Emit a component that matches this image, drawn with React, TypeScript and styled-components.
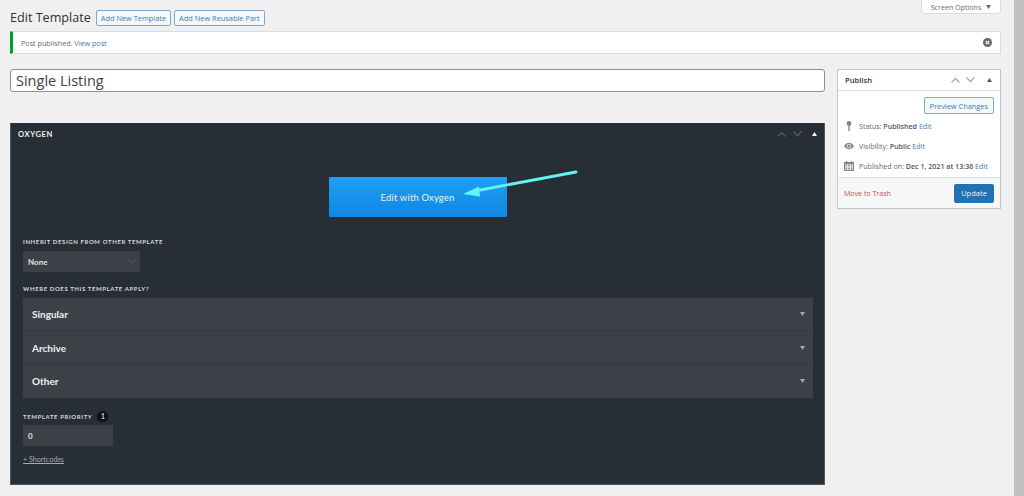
import React from 'react';
import styled, {createGlobalStyle} from "styled-components";

const GlobalStyle = createGlobalStyle`
  html, body {
    margin: 0;
    padding: 0;
    background: #f0f0f1;
    overflow: hidden;
  }
  * {
    box-sizing: border-box;
  }
`

const Chevron = ({up}: { up?: boolean }) => (
    <svg width="9" height="6" viewBox="0 0 9 6" fill="none">
        <path d={up ? "M0.5 5.5 L4.5 1.5 L8.5 5.5" : "M0.5 0.5 L4.5 4.5 L8.5 0.5"} stroke="currentColor" strokeWidth="1.3"/>
    </svg>
);

const Triangle = ({down}: { down?: boolean }) => (
    <svg width="5" height="4" viewBox="0 0 5 4" fill="currentColor">
        <path d={down ? "M0 0 H5 L2.5 4 Z" : "M0 4 H5 L2.5 0 Z"}/>
    </svg>
);

const PinIcon = () => (
    <svg width="10" height="10" viewBox="0 0 10 10" fill="#82878c">
        <circle cx="5" cy="2.4" r="2.4"/>
        <rect x="4.3" y="3.5" width="1.4" height="6.5"/>
    </svg>
);

const EyeIcon = () => (
    <svg width="10" height="10" viewBox="0 0 10 10">
        <path d="M0 5 C1.6 2.6 3.3 1.8 5 1.8 C6.7 1.8 8.4 2.6 10 5 C8.4 7.4 6.7 8.2 5 8.2 C3.3 8.2 1.6 7.4 0 5 Z" fill="#82878c"/>
        <circle cx="5" cy="5" r="2.3" fill="#e6e6e7"/>
        <circle cx="5" cy="5" r="1.5" fill="#82878c"/>
    </svg>
);

const CalendarIcon = () => (
    <svg width="10" height="10" viewBox="0 0 10 10" fill="#82878c">
        <rect x="0" y="1" width="10" height="9"/>
        <rect x="2" y="0" width="1.2" height="2"/>
        <rect x="6.8" y="0" width="1.2" height="2"/>
        <rect x="1" y="3.2" width="8" height="5.8" fill="#e6e6e7"/>
        <path d="M1.6 3.8h1.4v1.4H1.6zM4.3 3.8h1.4v1.4H4.3zM7 3.8h1.4v1.4H7zM1.6 6.6h1.4v1.8H1.6zM4.3 6.6h1.4v1.8H4.3zM7 6.6h1.4v1.8H7z"/>
    </svg>
);

const App = () => {
    return (
        <Page>
            <GlobalStyle/>
            <Main>
                <Header>
                    <TitleGroup>
                        <PageTitle>Edit Template</PageTitle>
                        <OutlineButton>Add New Template</OutlineButton>
                        <OutlineButton>Add New Reusable Part</OutlineButton>
                    </TitleGroup>
                    <ScreenOptions>Screen Options <Triangle down/></ScreenOptions>
                </Header>
                <Notice>
                    <span>Post published. <WpLink>View post</WpLink></span>
                    <Dismiss>
                        <svg width="9" height="9" viewBox="0 0 9 9">
                            <circle cx="4.5" cy="4.5" r="4.5" fill="#646970"/>
                            <path d="M2.8 2.8 L6.2 6.2 M6.2 2.8 L2.8 6.2" stroke="#fff" strokeWidth="1.2"/>
                        </svg>
                    </Dismiss>
                </Notice>
                <Columns>
                    <Left>
                        <TitleInput>Single Listing</TitleInput>
                        <OxygenPanel>
                            <OxygenHeader>
                                <OxygenTitle>OXYGEN</OxygenTitle>
                                <HandleActions>
                                    <Chevron up/>
                                    <Chevron/>
                                    <WhiteTriangle><Triangle/></WhiteTriangle>
                                </HandleActions>
                            </OxygenHeader>
                            <OxygenBody>
                                <EditRow>
                                    <EditButton>Edit with Oxygen</EditButton>
                                </EditRow>
                                <FieldLabel>INHERIT DESIGN FROM OTHER TEMPLATE</FieldLabel>
                                <SelectBox>
                                    None
                                    <svg width="8" height="5" viewBox="0 0 8 5" fill="none">
                                        <path d="M0.5 0.5 L4 4 L7.5 0.5" stroke="#55595f" strokeWidth="1"/>
                                    </svg>
                                </SelectBox>
                                <FieldLabel>WHERE DOES THIS TEMPLATE APPLY?</FieldLabel>
                                <Accordion>
                                    {['Singular', 'Archive', 'Other'].map((name) => (
                                        <AccordionRow key={name}>
                                            {name}
                                            <AccordionArrow><Triangle down/></AccordionArrow>
                                        </AccordionRow>
                                    ))}
                                </Accordion>
                                <PriorityLabel>
                                    <FieldLabel>TEMPLATE PRIORITY</FieldLabel>
                                    <InfoBadge>1</InfoBadge>
                                </PriorityLabel>
                                <PriorityInput>0</PriorityInput>
                                <Shortcodes>+ Shortcodes</Shortcodes>
                            </OxygenBody>
                            <Arrow width="130" height="40" viewBox="0 0 130 40">
                                <path d="M123 4 L27 22" stroke="#5ff5f8" strokeWidth="2.8" strokeLinecap="round"/>
                                <path d="M10 26 L26 18.5 L27 28.5 Z" fill="#5ff5f8"/>
                            </Arrow>
                        </OxygenPanel>
                    </Left>
                    <PublishBox>
                        <PublishHeader>
                            <PublishTitle>Publish</PublishTitle>
                            <PublishActions>
                                <Chevron up/>
                                <Chevron/>
                                <DarkTriangle><Triangle/></DarkTriangle>
                            </PublishActions>
                        </PublishHeader>
                        <PublishBody>
                            <PreviewRow>
                                <PreviewButton>Preview Changes</PreviewButton>
                            </PreviewRow>
                            <MetaRow><PinIcon/><span>Status: <b>Published</b> <WpLink>Edit</WpLink></span></MetaRow>
                            <MetaRow><EyeIcon/><span>Visibility: <b>Public</b> <WpLink>Edit</WpLink></span></MetaRow>
                            <MetaRow><CalendarIcon/><span>Published on: <b>Dec 1, 2021 at 13:36</b> <WpLink>Edit</WpLink></span></MetaRow>
                        </PublishBody>
                        <PublishFooter>
                            <TrashLink>Move to Trash</TrashLink>
                            <UpdateButton>Update</UpdateButton>
                        </PublishFooter>
                    </PublishBox>
                </Columns>
            </Main>
            <Scrollbar/>
        </Page>
    );
};

export default App;

const Page = styled.div`
  display: flex;
  width: 1024px;
  height: 496px;
  overflow: hidden;
  background: #f0f0f1;
  font-family: "Open Sans", "Liberation Sans", sans-serif;
  color: #3c434a;
`
const Main = styled.div`
  width: 1014px;
  padding: 0 13px 0 10px;
`
const Scrollbar = styled.div`
  width: 10px;
  background: #c1c1c1;
`
const Header = styled.div`
  display: flex;
  justify-content: space-between;
  align-items: flex-start;
  height: 31px;
`
const TitleGroup = styled.div`
  display: flex;
  align-items: center;
  gap: 3px;
  padding-top: 9px;
`
const PageTitle = styled.h1`
  margin: 0 2px 0 0;
  font-size: 12.6px;
  font-weight: 400;
  line-height: 17px;
  color: #2c3338;
`
const OutlineButton = styled.button`
  height: 16px;
  padding: 0 4px;
  border: 1px solid #7fa9cb;
  border-radius: 2px;
  background: #f6f7f7;
  color: #3a80b8;
  font-family: inherit;
  font-size: 7.4px;
  line-height: 14px;
  white-space: nowrap;
`
const PreviewButton = styled(OutlineButton)`
  height: 17px;
  padding: 0 5px;
`
const ScreenOptions = styled.div`
  display: flex;
  align-items: center;
  justify-content: center;
  gap: 5px;
  width: 80px;
  height: 14px;
  background: #fff;
  border: 1px solid #dcdcde;
  border-top: 0;
  border-radius: 0 0 3px 3px;
  font-size: 7.1px;
  color: #646970;
`
const Notice = styled.div`
  display: flex;
  justify-content: space-between;
  align-items: center;
  height: 23px;
  padding: 0 8px 0 8px;
  background: #fff;
  border: 1px solid #dcdcde;
  border-left: 3px solid #00a32a;
  font-size: 7.2px;
  color: #646970;
`
const WpLink = styled.span`
  color: #3a80b8;
  font-weight: 400;
`
const Dismiss = styled.span`
  display: flex;
`
const Columns = styled.div`
  display: grid;
  grid-template-columns: 815px 164px;
  gap: 12px;
  align-items: start;
  margin-top: 15px;
`
const Left = styled.div`
  display: flex;
  flex-direction: column;
  gap: 31px;
`
const TitleInput = styled.div`
  height: 23px;
  padding-left: 5px;
  background: #fff;
  border: 1px solid #8c8f94;
  border-radius: 3px;
  font-size: 14.5px;
  line-height: 21px;
  color: #3c434a;
`
const OxygenPanel = styled.section`
  position: relative;
  height: 362px;
  background: #272e35;
  border: 1px solid #50575e;
  border-width: 0 1px 1px 1px;
`
const OxygenHeader = styled.div`
  display: flex;
  justify-content: space-between;
  align-items: center;
  height: 22px;
  padding: 0 7px;
  border-bottom: 1px solid #232a30;
`
const OxygenTitle = styled.h2`
  margin: 0;
  font-family: Lato, "Open Sans", sans-serif;
  font-size: 7.6px;
  font-weight: 700;
  letter-spacing: 0.6px;
  color: #eceef0;
`
const HandleActions = styled.div`
  display: flex;
  align-items: center;
  gap: 7px;
  color: #565c63;
`
const WhiteTriangle = styled.span`
  display: flex;
  margin-left: 3px;
  color: #fff;
`
const OxygenBody = styled.div`
  display: flex;
  flex-direction: column;
  align-items: flex-start;
  padding: 32px 12px 0;
`
const EditRow = styled.div`
  display: flex;
  justify-content: center;
  width: 100%;
  margin-bottom: 20px;
`
const EditButton = styled.button`
  width: 178px;
  height: 40px;
  border: 0;
  border-radius: 1px;
  background: linear-gradient(#219ef5, #0f88e3);
  color: #e6f2fb;
  font-family: Lato, "Open Sans", sans-serif;
  font-size: 9.4px;
  letter-spacing: 0.2px;
`
const FieldLabel = styled.div`
  margin-bottom: 5px;
  font-family: Lato, "Open Sans", sans-serif;
  font-size: 6px;
  font-weight: 700;
  line-height: 9px;
  letter-spacing: 0.6px;
  color: #d5d9dd;
`
const SelectBox = styled.div`
  display: flex;
  justify-content: space-between;
  align-items: center;
  width: 117px;
  height: 21px;
  padding: 0 4px 0 5px;
  margin-bottom: 12px;
  background: #3c4148;
  border-radius: 1px;
  font-family: Lato, "Open Sans", sans-serif;
  font-size: 8px;
  font-weight: 700;
  color: #dfe2e5;
`
const Accordion = styled.div`
  display: flex;
  flex-direction: column;
  width: 790px;
  margin-bottom: 13px;
`
const AccordionRow = styled.div`
  display: flex;
  justify-content: space-between;
  align-items: center;
  height: 33.4px;
  padding: 0 8px 0 9px;
  background: #3c4148;
  border-bottom: 1px solid #353a40;
  font-family: Lato, "Open Sans", sans-serif;
  font-size: 10px;
  font-weight: 700;
  color: #eef0f1;

  &:last-child {
    border-bottom: 0;
  }
`
const AccordionArrow = styled.span`
  display: flex;
  color: #a4a7ab;
`
const PriorityLabel = styled.div`
  display: flex;
  align-items: center;
  gap: 5px;
  height: 11px;
  margin-bottom: 3px;

  ${FieldLabel} {
    margin-bottom: 0;
  }
`
const InfoBadge = styled.span`
  display: flex;
  align-items: center;
  justify-content: center;
  width: 11px;
  height: 11px;
  border-radius: 50%;
  background: #0f1216;
  color: #d5d9dd;
  font-family: Lato, sans-serif;
  font-size: 6.5px;
  font-weight: 700;
`
const PriorityInput = styled.div`
  display: flex;
  align-items: center;
  width: 90px;
  height: 21px;
  padding-left: 5px;
  margin-bottom: 9px;
  background: #3c4148;
  border-radius: 1px;
  font-family: Lato, sans-serif;
  font-size: 8px;
  font-weight: 700;
  color: #dfe2e5;
`
const Shortcodes = styled.a`
  font-family: Lato, sans-serif;
  font-size: 7.1px;
  text-decoration: underline;
  color: #a4aab0;
`
const Arrow = styled.svg`
  position: absolute;
  left: 442px;
  top: 45px;
`
const PublishBox = styled.aside`
  background: #fff;
  border: 1px solid #c3c4c7;
`
const PublishHeader = styled.div`
  display: flex;
  justify-content: space-between;
  align-items: center;
  height: 21px;
  padding: 0 8px 0 7px;
  border-bottom: 1px solid #dcdcde;
`
const PublishTitle = styled.h2`
  margin: 0;
  font-size: 7.6px;
  font-weight: 600;
  color: #2c3338;
`
const PublishActions = styled(HandleActions)`
  gap: 6px;
  color: #a7aaad;
`
const DarkTriangle = styled(WhiteTriangle)`
  margin-left: 6px;
  color: #50575e;
`
const PublishBody = styled.div`
  display: flex;
  flex-direction: column;
  padding: 6px 6px 0 6px;
`
const PreviewRow = styled.div`
  display: flex;
  justify-content: flex-end;
  margin-bottom: 6px;
`
const MetaRow = styled.div`
  display: flex;
  align-items: center;
  gap: 5px;
  height: 12px;
  margin-bottom: 8px;
  font-size: 7.1px;
  white-space: nowrap;
  color: #646970;

  b {
    font-weight: 600;
    color: #50575e;
  }
`
const PublishFooter = styled.div`
  display: flex;
  justify-content: space-between;
  align-items: center;
  height: 31px;
  margin-top: -3px;
  padding: 0 6px 0 6px;
  background: #f6f7f7;
  border-top: 1px solid #dcdcde;
`
const TrashLink = styled.span`
  font-size: 7.05px;
  color: #c2504f;
`
const UpdateButton = styled.button`
  width: 40px;
  height: 19px;
  padding: 0;
  border: 1px solid #2271b1;
  border-radius: 2px;
  background: #2271b1;
  color: #e8f1f8;
  font-family: inherit;
  font-size: 7.5px;
`
